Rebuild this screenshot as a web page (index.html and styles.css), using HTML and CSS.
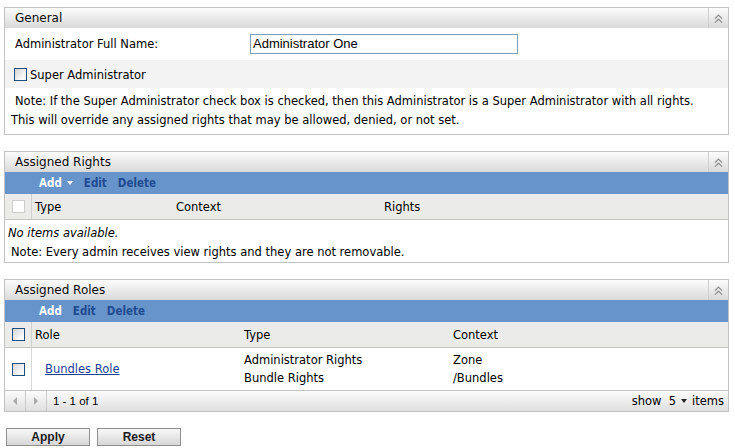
FILE: index.html
```html
<!DOCTYPE html>
<html>
<head>
<meta charset="utf-8">
<link rel="stylesheet" href="styles.css">
</head>
<body>
<div class="page">
  <section class="panel">
    <div class="panel-head">
      <span class="title">General</span>
      <span class="collapse"><svg width="9" height="9" viewBox="0 0 9 9"><path d="M1 4.6 L4.5 1.1 L8 4.6 M1 8.6 L4.5 5.1 L8 8.6" stroke="#8c8c8c" stroke-width="1.3" fill="none"/></svg></span>
    </div>
    <div class="field-row">
      <label class="field-label">Administrator Full Name:</label>
      <input class="text-input" type="text" value="Administrator One">
    </div>
    <div class="check-row">
      <span class="cb"></span><span>Super Administrator</span>
    </div>
    <div class="note-block">Note: If the Super Administrator check box is checked, then this Administrator is a Super Administrator with all rights.<br>This will override any assigned rights that may be allowed, denied, or not set.</div>
  </section>

  <section class="panel">
    <div class="panel-head">
      <span class="title">Assigned Rights</span>
      <span class="collapse"><svg width="9" height="9" viewBox="0 0 9 9"><path d="M1 4.6 L4.5 1.1 L8 4.6 M1 8.6 L4.5 5.1 L8 8.6" stroke="#8c8c8c" stroke-width="1.3" fill="none"/></svg></span>
    </div>
    <div class="toolbar">
      <span class="tb-add">Add<span class="tb-caret"></span></span>
      <span class="tb-link">Edit</span>
      <span class="tb-link">Delete</span>
    </div>
    <div class="col-head">
      <span class="cb-cell"><span class="cb cb-disabled"></span></span>
      <span class="col rights-type">Type</span>
      <span class="col rights-context">Context</span>
      <span class="col">Rights</span>
    </div>
    <div class="empty">No items available.</div>
    <div class="rights-note">Note: Every admin receives view rights and they are not removable.</div>
  </section>

  <section class="panel">
    <div class="panel-head">
      <span class="title">Assigned Roles</span>
      <span class="collapse"><svg width="9" height="9" viewBox="0 0 9 9"><path d="M1 4.6 L4.5 1.1 L8 4.6 M1 8.6 L4.5 5.1 L8 8.6" stroke="#8c8c8c" stroke-width="1.3" fill="none"/></svg></span>
    </div>
    <div class="toolbar">
      <span class="tb-add">Add</span>
      <span class="tb-link">Edit</span>
      <span class="tb-link">Delete</span>
    </div>
    <div class="col-head">
      <span class="cb-cell"><span class="cb"></span></span>
      <span class="col roles-role">Role</span>
      <span class="col roles-type">Type</span>
      <span class="col">Context</span>
    </div>
    <div class="data-row">
      <span class="cb-cell"><span class="cb"></span></span>
      <span class="col roles-role"><a class="role-link" href="#">Bundles Role</a></span>
      <span class="col roles-type stack"><span>Administrator Rights</span><span>Bundle Rights</span></span>
      <span class="col stack"><span>Zone</span><span>/Bundles</span></span>
    </div>
    <div class="pager">
      <span class="pg-btn"><span class="arrow-left"></span></span>
      <span class="pg-btn"><span class="arrow-right"></span></span>
      <span class="pg-text">1 - 1 of 1</span>
      <span class="pg-size">show&nbsp; 5<span class="size-caret"></span> items</span>
    </div>
  </section>

  <div class="actions">
    <button class="btn" type="button">Apply</button>
    <button class="btn" type="button">Reset</button>
  </div>
</div>
</body>
</html>
```
FILE: styles.css
```css
* { box-sizing: border-box; }

body {
  margin: 0;
  background: #fff;
  color: #000;
  font-family: "DejaVu Sans", sans-serif;
  font-size: 11.5px;
}

.page {
  padding: 7px 0 0 4px;
}

.panel {
  width: 725px;
  border: 1px solid #c2c2c2;
  margin-bottom: 16px;
}

.panel-head {
  display: flex;
  height: 20px;
  background: linear-gradient(#fcfcfc, #e9e9e9 55%, #d9d9d9);
}

.title {
  flex: 1;
  padding-left: 10px;
  font-size: 12px;
  line-height: 20px;
  color: #0a0a0a;
}

.collapse {
  width: 20px;
  border-left: 1px solid #cfcfcf;
  display: flex;
  align-items: center;
  justify-content: center;
}

.field-row {
  display: flex;
  align-items: center;
  height: 32px;
  padding-left: 10px;
}

.field-label {
  width: 235px;
}

.text-input {
  width: 268px;
  height: 20px;
  border: 1px solid #7f9db9;
  padding: 0 2px;
  font-family: "Liberation Sans", sans-serif;
  font-size: 13px;
  color: #000;
  margin-top: -1px;
}

.check-row {
  display: flex;
  align-items: center;
  height: 28px;
  background: #f3f3f3;
  padding: 1px 0 0 9px;
  gap: 3px;
}

.cb {
  display: inline-block;
  width: 13px;
  height: 13px;
  border: 1px solid #1f4d7e;
  background: linear-gradient(135deg, #d5d5d5, #f7f7f7 70%, #fff);
}

.cb-disabled {
  border-color: #cdcdcd;
  background: #fff;
}

.note-block {
  height: 46px;
  padding: 4px 6px 0 6px;
  line-height: 19px;
  text-indent: 4px;
}

.toolbar {
  display: flex;
  align-items: center;
  height: 22px;
  background: #6894cc;
  padding-left: 34px;
  gap: 11px;
  font-weight: bold;
  font-family: "DejaVu Sans Condensed", "DejaVu Sans", sans-serif;
  font-stretch: condensed;
  font-size: 11.5px;
}

.tb-add {
  color: #fff;
  display: inline-flex;
  align-items: center;
}

.tb-caret {
  display: inline-block;
  margin-left: 5px;
  border-left: 3.5px solid transparent;
  border-right: 3.5px solid transparent;
  border-top: 4px solid #fff;
}

.tb-link { color: #1f4b8f; }

.col-head {
  display: flex;
  align-items: stretch;
  height: 26px;
  background: #ebebea;
  border-bottom: 1px solid #c4c4c4;
}

.cb-cell {
  width: 27px;
  border-right: 1px solid #cfcfcf;
  padding-left: 7px;
  display: flex;
  align-items: center;
}

.col {
  display: flex;
  align-items: center;
  padding-left: 3px;
}

.rights-type { width: 140px; }
.rights-context { width: 209px; padding-left: 4px; }
.roles-role { width: 209px; }
.roles-type { width: 209px; }

.empty {
  height: 23px;
  padding: 3px 0 0 3px;
  line-height: 21px;
  font-style: italic;
}

.rights-note {
  height: 19px;
  line-height: 19px;
  padding-left: 6px;
}

.data-row {
  display: flex;
  height: 43px;
  border-bottom: 1px solid #c4c4c4;
}

.data-row .cb-cell { border-right-color: #d6d6d6; }

.stack {
  flex-direction: column;
  align-items: flex-start;
  justify-content: center;
  line-height: 18px;
}

.role-link {
  margin-left: 10px;
  color: #1b3d99;
  text-decoration: underline;
}

.pager {
  display: flex;
  align-items: stretch;
  height: 20px;
  background: linear-gradient(#fbfbfb, #ececec 55%, #dedede);
}

.pg-btn {
  width: 21px;
  border-right: 1px solid #cacaca;
  display: flex;
  align-items: center;
  justify-content: center;
}

.arrow-left {
  border-top: 4px solid transparent;
  border-bottom: 4px solid transparent;
  border-right: 4px solid #a9a9a9;
}

.arrow-right {
  border-top: 4px solid transparent;
  border-bottom: 4px solid transparent;
  border-left: 4px solid #a9a9a9;
}

.pg-text {
  flex: 1;
  padding-left: 6px;
  line-height: 20px;
  font-family: "Liberation Sans", sans-serif;
  font-size: 11.5px;
}

.pg-size {
  padding-right: 4px;
  line-height: 20px;
  display: flex;
  align-items: center;
}

.size-caret {
  display: inline-block;
  margin: 0 5px 0 5px;
  border-left: 3.5px solid transparent;
  border-right: 3.5px solid transparent;
  border-top: 4px solid #222;
}

.actions {
  display: flex;
  gap: 7px;
  padding-left: 2px;
}

.btn {
  width: 84px;
  height: 18px;
  padding: 0;
  border: 1px solid #8e8e8e;
  border-radius: 0;
  background: linear-gradient(#f8f8f8, #e6e6e6 55%, #d6d6d6);
  font-family: "Liberation Sans", sans-serif;
  font-weight: bold;
  font-size: 12px;
  color: #1a1a1a;
}
```
